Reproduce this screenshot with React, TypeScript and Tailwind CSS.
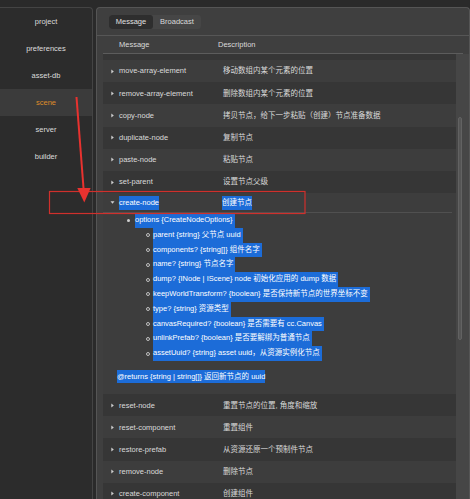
import React from "react";

const FONT = "font-['Liberation_Sans','Noto_Sans_CJK_SC',sans-serif]";

const sideItems = ["project", "preferences", "asset-db", "scene", "server", "builder"];

type Row = { name: string; desc: string };

const topRows: Row[] = [
  { name: "", desc: "" },
  { name: "move-array-element", desc: "移动数组内某个元素的位置" },
  { name: "remove-array-element", desc: "删除数组内某个元素的位置" },
  { name: "copy-node", desc: "拷贝节点，给下一步粘贴（创建）节点准备数据" },
  { name: "duplicate-node", desc: "复制节点" },
  { name: "paste-node", desc: "粘贴节点" },
  { name: "set-parent", desc: "设置节点父级" },
];

const bottomRows: Row[] = [
  { name: "reset-node", desc: "重置节点的位置, 角度和缩放" },
  { name: "reset-component", desc: "重置组件" },
  { name: "restore-prefab", desc: "从资源还原一个预制件节点" },
  { name: "remove-node", desc: "删除节点" },
  { name: "create-component", desc: "创建组件" },
];

const subItems = [
  "parent {string} 父节点 uuid",
  "components? {string[]} 组件名字",
  "name? {string} 节点名字",
  "dump? {INode | IScene} node 初始化应用的 dump 数据",
  "keepWorldTransform? {boolean} 是否保持新节点的世界坐标不变",
  "type? {string} 资源类型",
  "canvasRequired? {boolean} 是否需要有 cc.Canvas",
  "unlinkPrefab? {boolean} 是否要解绑为普通节点",
  "assetUuid? {string} asset uuid，从资源实例化节点",
];

function Tri({ down = false }: { down?: boolean }) {
  return (
    <svg width="5" height="5" viewBox="0 0 5 5" className="block">
      {down ? (
        <polygon points="0.5,1.2 4.5,1.2 2.5,3.8" fill="#d0d0d0" />
      ) : (
        <polygon points="1.3,0.5 3.8,2.5 1.3,4.5" fill="#d0d0d0" />
      )}
    </svg>
  );
}

function RowView({ row, dark }: { row: Row; dark: boolean }) {
  return (
    <div className={`h-[22.2px] flex items-center ${dark ? "bg-[#363636]" : "bg-[#3d3d3d]"}`}>
      <div className="w-[16px] pl-[7px]">{row.name ? <Tri /> : null}</div>
      <div className="w-[104px] whitespace-nowrap">{row.name}</div>
      <div className="whitespace-nowrap">{row.desc}</div>
    </div>
  );
}

export default function App() {
  return (
    <div
      className={`relative w-[470px] h-[499px] overflow-hidden bg-[#2a2a2a] pt-[7px] flex ${FONT} text-[7.5px] text-[#dadada]`}
    >
      {/* Sidebar */}
      <div className="w-[93px] h-full bg-[#2c2c2c] border-t border-r border-[#444444] rounded-tr-[4px] flex flex-col">
        {sideItems.map((it) => (
          <div
            key={it}
            className={`h-[27px] flex items-center justify-center ${
              it === "scene" ? "bg-[#3b3b3b] text-[#de8c2a]" : "text-[#dcdcdc]"
            }`}
          >
            {it}
          </div>
        ))}
      </div>

      {/* Main panel */}
      <div className="flex-1 ml-[3px] h-full bg-[#3f3f3f] border-t border-l border-r border-[#555555] rounded-t-[4px] flex flex-col">
        {/* tabs */}
        <div className="h-[28px] border-b border-[#565656] flex items-center pl-[12px]">
          <div className="flex h-[14px] rounded-[3px] bg-[#464646] overflow-hidden">
            <div className="w-[44px] flex items-center justify-center bg-[#2e2e2e] rounded-[3px] text-[#e0e0e0]">
              Message
            </div>
            <div className="w-[48px] flex items-center justify-center text-[#dadada]">Broadcast</div>
          </div>
        </div>

        {/* header */}
        <div className="mx-[6px] h-[18px] border-b border-[#5c5c5c] flex items-center">
          <div className="w-[115px] pl-[16px]">Message</div>
          <div>Description</div>
        </div>

        {/* body */}
        <div className="flex-1 flex min-h-0">
          <div className="flex-1 pl-[6px] overflow-hidden">
            <div className="mt-[-16.2px]">
              {topRows.map((r, i) => (
                <RowView key={i} row={r} dark={i % 2 === 0} />
              ))}

              {/* expanded create-node */}
              <div className="bg-[#3d3d3d] pb-[11px]">
                <div className="h-[20px] mr-[4px] border-b border-[#505050] flex items-center">
                  <div className="w-[16px] pl-[7px]">
                    <Tri down />
                  </div>
                  <div className="w-[103px]">
                    <span className="inline-block leading-[14px] bg-[#1c6cd8] text-white">create-node</span>
                  </div>
                  <div>
                    <span className="inline-block leading-[14px] bg-[#1c6cd8] text-white">创建节点</span>
                  </div>
                </div>
                <div className="h-[14.75px] flex items-center pl-[24px]">
                  <span className="w-[3px] h-[3px] rounded-full bg-[#d0d0d0]" />
                  <span className="ml-[5px] inline-block leading-[14.75px] bg-[#1c6cd8] text-white pr-[2px]">
                    options {"{CreateNodeOptions}"}
                  </span>
                </div>
                <div className="flex flex-col">
                  {subItems.map((s) => (
                    <div key={s} className="h-[14.8px] flex items-center pl-[43px]">
                      <span className="w-[4px] h-[4px] rounded-full border border-[#c0c0c0]" />
                      <span className="ml-[3px] inline-block h-full leading-[14.8px] bg-[#1c6cd8] text-white pr-[2px] whitespace-nowrap">
                        {s}
                      </span>
                    </div>
                  ))}
                </div>
                <div className="mt-[9px] pl-[14px]">
                  <span className="inline-block leading-[13px] bg-[#1c6cd8] text-white whitespace-nowrap">
                    @returns {"{string | string[]}"} 返回新节点的 uuid
                  </span>
                </div>
              </div>

              {bottomRows.map((r, i) => (
                <RowView key={r.name} row={r} dark={i % 2 === 0} />
              ))}
            </div>
          </div>
          {/* scrollbar */}
          <div className="w-[13px] bg-[#464646] flex flex-col">
            <div className="ml-[2px] mt-[63px] w-[4px] h-[223px] rounded-[2px] bg-[#555555] border border-[#626262]" />
          </div>
        </div>
      </div>

      {/* annotation overlay */}
      <svg className="absolute left-0 top-0 pointer-events-none" width="470" height="499" viewBox="0 0 470 499">
        <rect x="49.5" y="191.5" width="255.5" height="22" fill="none" stroke="#d0302c" strokeWidth="1.2" />
        <line x1="76.5" y1="97" x2="83.8" y2="192" stroke="#e8322f" strokeWidth="2" />
        <polygon points="77.3,188 90.6,188 84.3,202.5" fill="#e8322f" />
      </svg>
    </div>
  );
}
